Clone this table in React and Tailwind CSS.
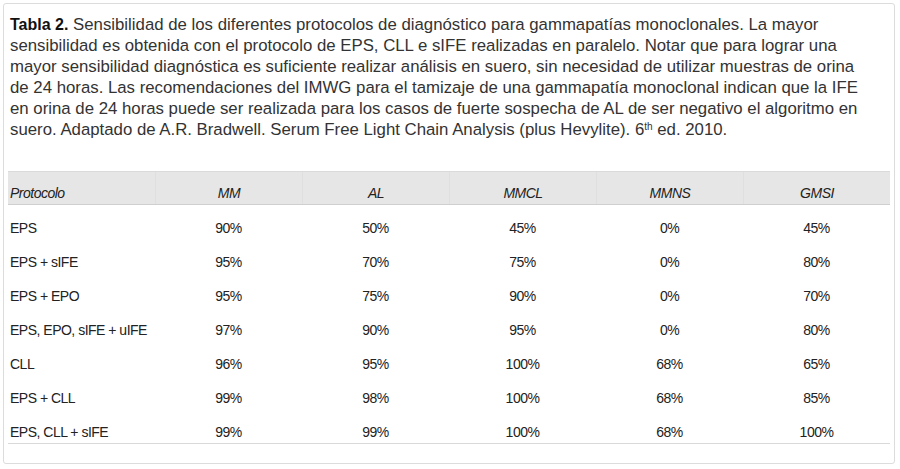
import React from 'react';

const headers = ['Protocolo', 'MM', 'AL', 'MMCL', 'MMNS', 'GMSI'];

const rows = [
  ['EPS', '90%', '50%', '45%', '0%', '45%'],
  ['EPS + sIFE', '95%', '70%', '75%', '0%', '80%'],
  ['EPS + EPO', '95%', '75%', '90%', '0%', '70%'],
  ['EPS, EPO, sIFE + uIFE', '97%', '90%', '95%', '0%', '80%'],
  ['CLL', '96%', '95%', '100%', '68%', '65%'],
  ['EPS + CLL', '99%', '98%', '100%', '68%', '85%'],
  ['EPS, CLL + sIFE', '99%', '99%', '100%', '68%', '100%'],
];

const font = { fontFamily: '"Liberation Sans", Arial, sans-serif' };

export default function App() {
  return (
    <div className="w-[900px] h-[469px] bg-white pl-[3px] pt-[3px]" style={font}>
      <div className="w-[892px] h-[461px] border border-[#dcdcdc] rounded-[3px]">
        {/* Caption */}
        <div className="h-[137px] pt-[10px] pl-[6px] text-[16.8px] leading-[21px] text-[#333] whitespace-nowrap">
          <div>
            <span className="font-bold text-[16px] text-[#111]">Tabla 2.</span>{' '}
            Sensibilidad de los diferentes protocolos de diagnóstico para gammapatías monoclonales. La mayor
          </div>
          <div>sensibilidad es obtenida con el protocolo de EPS, CLL e sIFE realizadas en paralelo. Notar que para lograr una</div>
          <div>mayor sensibilidad diagnóstica es suficiente realizar análisis en suero, sin necesidad de utilizar muestras de orina</div>
          <div>de 24 horas. Las recomendaciones del IMWG para el tamizaje de una gammapatía monoclonal indican que la IFE</div>
          <div>en orina de 24 horas puede ser realizada para los casos de fuerte sospecha de AL de ser negativo el algoritmo en</div>
          <div>
            suero. Adaptado de A.R. Bradwell. Serum Free Light Chain Analysis (plus Hevylite). 6<sup className="text-[10px]">th</sup> ed. 2010.
          </div>
        </div>

        {/* Table */}
        <div className="mt-[30px] px-[4px] text-[14px] leading-[16px] tracking-[-0.5px] text-[#222]">
          <div className="grid grid-cols-6 h-[34px] bg-[#e6e6e6] border-t border-b border-t-[#dadada] border-b-[#cfcfcf] italic">
            {headers.map((h, i) => (
              <div
                key={h}
                className={i === 0 ? 'pt-[13px] pl-[2px]' : 'pt-[13px] text-center border-l border-[#dfdfdf]'}
              >
                {h}
              </div>
            ))}
          </div>
          <div className="border-b border-[#d9d9d9]">
            {rows.map((r) => (
              <div key={r[0]} className="grid grid-cols-6 h-[34px]">
                {r.map((c, i) => (
                  <div key={i} className={i === 0 ? 'pt-[15px] pl-[2px]' : 'pt-[15px] text-center'}>
                    {c}
                  </div>
                ))}
              </div>
            ))}
          </div>
        </div>
      </div>
    </div>
  );
}
